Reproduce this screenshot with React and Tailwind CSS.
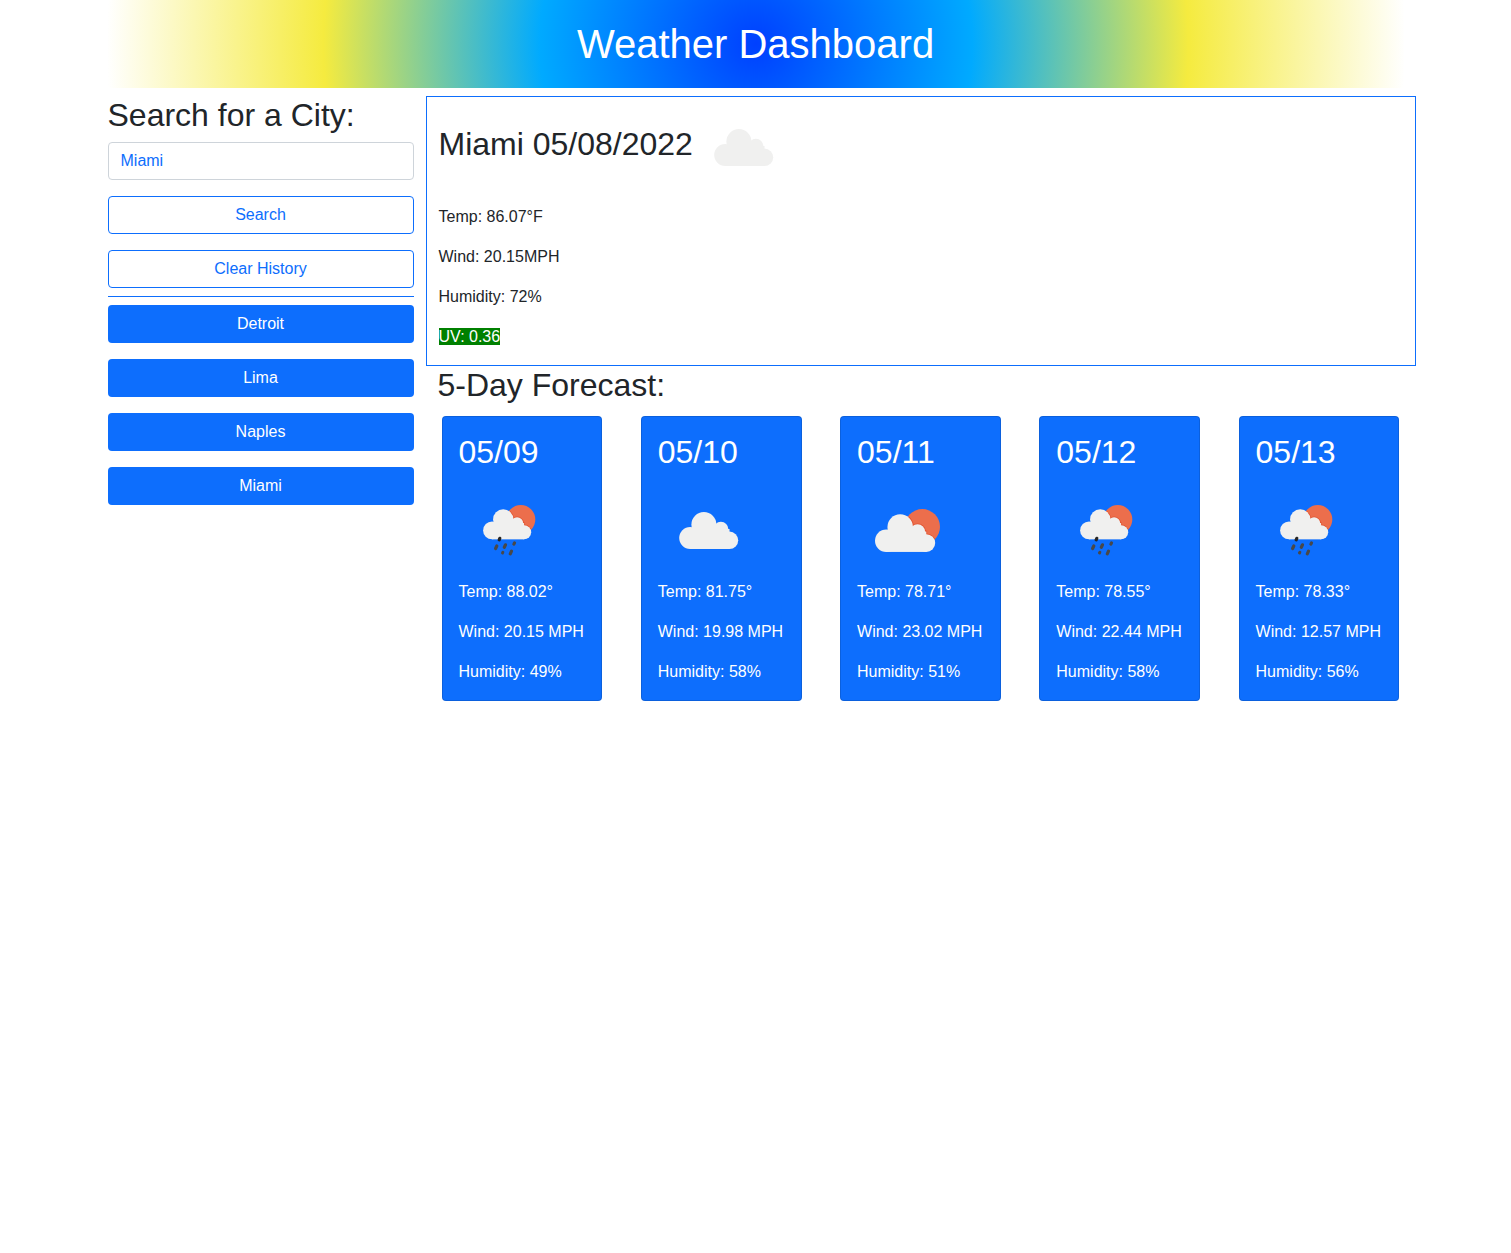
import React from "react";

const history = ["Detroit", "Lima", "Naples", "Miami"];

const forecast = [
  { date: "05/09", icon: "rain", temp: "88.02", wind: "20.15", humidity: 49 },
  { date: "05/10", icon: "cloud", temp: "81.75", wind: "19.98", humidity: 58 },
  { date: "05/11", icon: "partly", temp: "78.71", wind: "23.02", humidity: 51 },
  { date: "05/12", icon: "rain", temp: "78.55", wind: "22.44", humidity: 58 },
  { date: "05/13", icon: "rain", temp: "78.33", wind: "12.57", humidity: 56 },
];

// Cloud outline in its own 59 x 37 box.
function Cloud(props) {
  return (
    <g {...props}>
      <circle cx="11" cy="26" r="11" />
      <circle cx="24.7" cy="12.5" r="12.5" />
      <circle cx="41.7" cy="17.3" r="7.5" />
      <circle cx="50.3" cy="28.3" r="8.7" />
      <rect x="11" y="17" width="39.3" height="20" />
    </g>
  );
}

function CloudIcon() {
  return <Cloud fill="#f0f0ef" transform="translate(21.2 32)" />;
}

function PartlyIcon() {
  return (
    <>
      <clipPath id="sun-large">
        <circle cx="65.3" cy="46.8" r="17.7" />
      </clipPath>
      <circle cx="65.3" cy="46.8" r="17.7" fill="#ec6e4c" />
      <g clipPath="url(#sun-large)">
        <Cloud fill="#e2532f" stroke="#e2532f" strokeWidth="1.6" transform="translate(18 34.2) scale(1.02)" />
      </g>
      <Cloud fill="#f0f0ef" transform="translate(18 34.2) scale(1.02)" />
    </>
  );
}

function RainIcon() {
  return (
    <>
      <clipPath id="sun-small">
        <circle cx="61.8" cy="39.4" r="14.5" />
      </clipPath>
      <circle cx="61.8" cy="39.4" r="14.5" fill="#ec6e4c" />
      <g clipPath="url(#sun-small)">
        <Cloud fill="#e2532f" stroke="#e2532f" strokeWidth="1.6" transform="translate(24.1 29.2) scale(0.815)" />
      </g>
      <Cloud fill="#f0f0ef" transform="translate(24.1 29.2) scale(0.815)" />
      <g stroke="#484849" strokeWidth="3.2" strokeLinecap="round">
        <path d="M40.8 58.3L40.2 59.8" stroke="#262626" />
        <path d="M46.5 64.8L45.3 67.3" />
        <path d="M37.8 66L36.6 68.5" />
        <path d="M55.5 62.9L54.9 64.1" />
        <path d="M43.9 72.2L43.5 73" strokeWidth="2.9" />
        <path d="M52.5 71.2L51.3 73.8" />
      </g>
    </>
  );
}

function WeatherIcon({ kind }) {
  return (
    <svg viewBox="0 0 100 100" className="block size-[100px] shrink-0" aria-hidden="true">
      {kind === "cloud" && <CloudIcon />}
      {kind === "partly" && <PartlyIcon />}
      {kind === "rain" && <RainIcon />}
    </svg>
  );
}

function ForecastCard({ day }) {
  return (
    <article className="w-[160.8px] rounded border border-black/[.125] bg-[#0d6efd] p-4 text-white">
      <h2 className="mb-2 text-[32px] leading-[38.4px]">{day.date}</h2>
      <WeatherIcon kind={day.icon} />
      <div className="flex flex-col gap-4 whitespace-nowrap">
        <p>Temp: {day.temp}°</p>
        <p>Wind: {day.wind} MPH</p>
        <p>Humidity: {day.humidity}%</p>
      </div>
    </article>
  );
}

export default function App() {
  return (
    <div className="min-h-screen bg-white font-['Liberation_Sans',Arial,sans-serif] text-base text-[#212529]">
      <div className="mx-auto w-[1320px]">
        <header className="mx-3 mb-2 bg-[radial-gradient(circle,#0040ff_0%,#00aaff_33.3%,#f5eb3f_66.6%,#ffffff_100%)] py-5 text-center text-white">
          <h1 className="text-[40px] leading-[48px]">Weather Dashboard</h1>
        </header>
        <div className="flex">
          <aside className="w-1/4 px-3">
            <h2 className="mb-2 text-[32px] leading-[38.4px]">Search for a City:</h2>
            <div className="flex flex-col gap-4">
              <input
                className="h-[38px] w-full rounded border border-[#ced4da] px-3 text-[#0d6efd] outline-none"
                defaultValue="Miami"
                aria-label="City"
              />
              <button className="h-[38px] rounded border border-[#0d6efd] text-[#0d6efd]">Search</button>
              <button className="h-[38px] rounded border border-[#0d6efd] text-[#0d6efd]">Clear History</button>
            </div>
            <hr className="my-2 h-px border-0 bg-[#0d6efd]" />
            <div className="flex flex-col gap-4">
              {history.map((city) => (
                <button key={city} className="h-[38px] rounded bg-[#0d6efd] text-white">
                  {city}
                </button>
              ))}
            </div>
          </aside>
          <main className="w-3/4">
            <section className="border border-[#0d6efd] px-3 pb-4">
              <div className="mb-2 flex items-center">
                <h2 className="pb-1.5 text-[32px] leading-[38.4px]">Miami 05/08/2022</h2>
                <WeatherIcon kind="cloud" />
              </div>
              <div className="flex flex-col gap-4 text-[#212529]">
                <p>Temp: 86.07°F</p>
                <p>Wind: 20.15MPH</p>
                <p>Humidity: 72%</p>
                <p>
                  <span className="bg-[#008000] text-white">UV: 0.36</span>
                </p>
              </div>
            </section>
            <section className="px-3">
              <h2 className="mb-3 text-[32px] leading-[38.4px]">5-Day Forecast:</h2>
              <div className="flex gap-[38.48px] px-1">
                {forecast.map((day) => (
                  <ForecastCard key={day.date} day={day} />
                ))}
              </div>
            </section>
          </main>
        </div>
      </div>
    </div>
  );
}
